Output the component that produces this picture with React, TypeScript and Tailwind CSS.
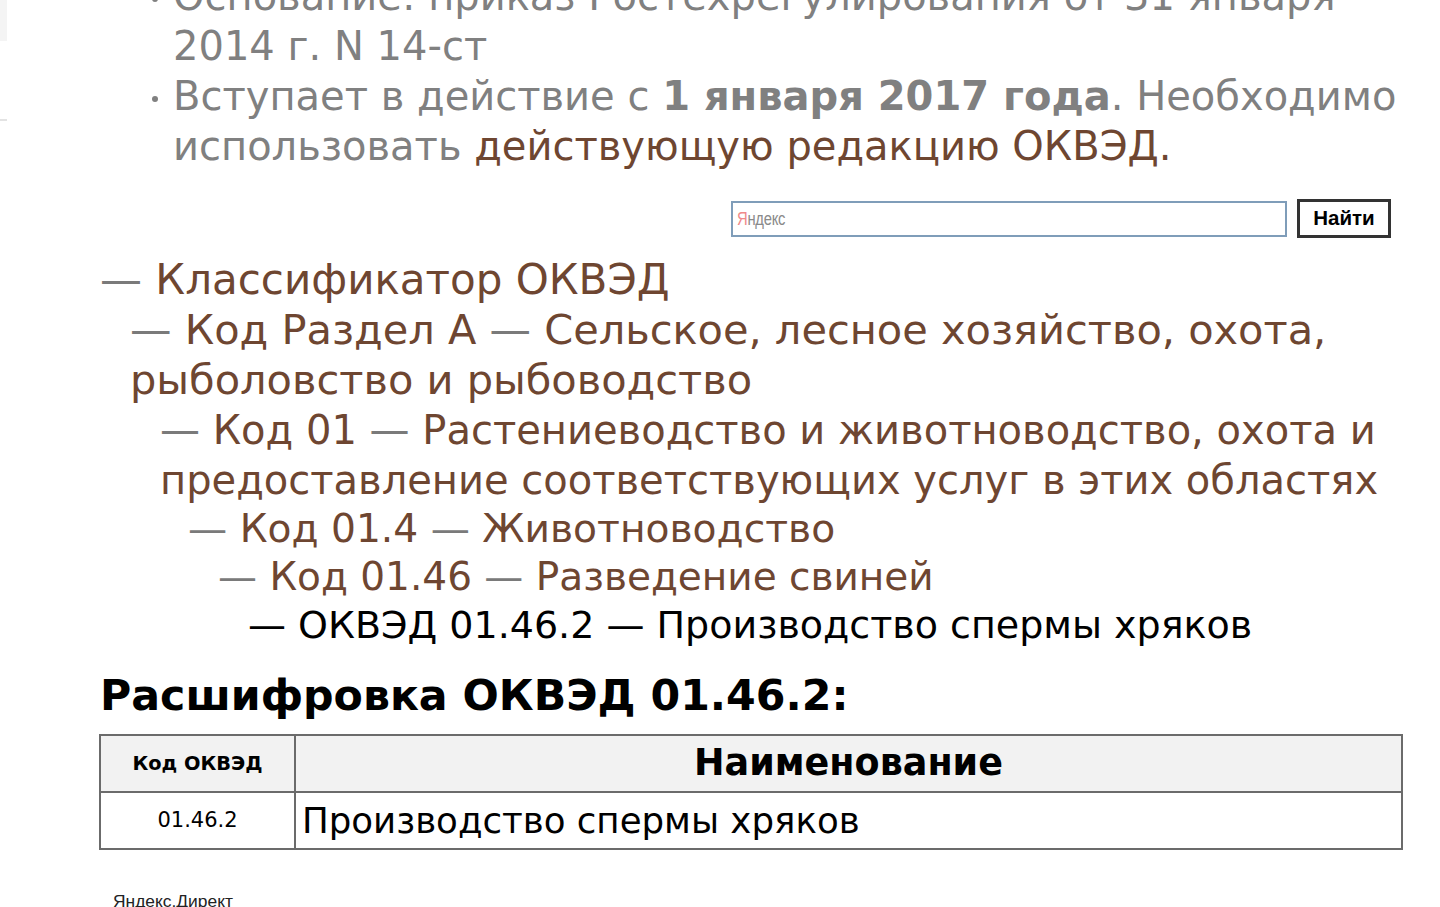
import React from 'react';

const gray = 'text-[#808080]';
const brown = 'text-[#6e4631]';

function Dash() {
  return <span className="text-[#7a7a7a]">—</span>;
}

function TreeRow({ cls, children }: { cls: string; children: React.ReactNode }) {
  return <div className={`whitespace-nowrap ${cls}`}>{children}</div>;
}

function Bullet() {
  return (
    <span className="w-[21px] shrink-0">
      <span className="inline-block h-[6px] w-[6px] rounded-full bg-[#808080] align-middle" />
    </span>
  );
}

export default function App() {
  return (
    <div className="min-h-screen bg-white overflow-hidden font-['DejaVu_Sans',Verdana,sans-serif] text-[36px]">
      <div className="flex">
        {/* leftover sidebar edge */}
        <div className="w-[7px] shrink-0">
          <div className="h-[41px] bg-[#f4f4f4]" />
          <div className="mt-[78px] h-[2px] bg-[#e3e3e3]" />
        </div>

        <div className="w-[1395px] shrink-0">
          {/* notes */}
          <div className={`-mt-[29px] pl-[145px] text-[40px] leading-[50px] whitespace-nowrap ${gray}`}>
            <div className="flex">
              <Bullet />
              <div>
                Основание: приказ Ростехрегулирования от 31 января
                <br />
                2014 г. N 14-ст
              </div>
            </div>
            <div className="flex">
              <Bullet />
              <div>
                Вступает в действие с <b>1 января 2017 года</b>. Необходимо
                <br />
                использовать <a className={brown}>действующую редакцию ОКВЭД.</a>
              </div>
            </div>
          </div>

          {/* yandex search */}
          <div className="mt-[28px] flex justify-end gap-[10px] pr-[11px]">
            <div className="mt-[2px] flex h-[36px] w-[556px] items-center border-2 border-[#7f9db9] bg-white pl-[4px]">
              <span className="origin-left scale-x-[0.82] font-['Liberation_Sans',Arial,sans-serif] text-[18px] tracking-[-0.3px] text-[#8a8a8a]">
                <span className="text-[#f08a8a]">Я</span>ндекс
              </span>
            </div>
            <button className="h-[39px] w-[94px] border-[3px] border-[#333333] bg-white font-['Liberation_Sans',Arial,sans-serif] text-[20.5px] font-bold text-black">
              Найти
            </button>
          </div>

          {/* classifier tree */}
          <div className={`mt-[17px] ${brown}`}>
            <TreeRow cls="pl-[93px] text-[42px] leading-[50px]">
              <Dash /> Классификатор ОКВЭД
            </TreeRow>
            <TreeRow cls="pl-[123px] text-[41.5px] leading-[50px]">
              <Dash /> Код Раздел А <Dash /> Сельское, лесное хозяйство, охота,
              <br />
              рыболовство и рыбоводство
            </TreeRow>
            <TreeRow cls="pl-[153px] text-[40px] leading-[50px]">
              <Dash /> Код 01 <Dash /> Растениеводство и животноводство, охота и
              <br />
              предоставление соответствующих услуг в этих областях
            </TreeRow>
            <TreeRow cls="pl-[181px] text-[39.2px] leading-[48px]">
              <Dash /> Код 01.4 <Dash /> Животноводство
            </TreeRow>
            <TreeRow cls="pl-[211px] text-[39px] leading-[48px]">
              <Dash /> Код 01.46 <Dash /> Разведение свиней
            </TreeRow>
            <div className="whitespace-nowrap pl-[241px] text-[38px] leading-[48px] text-black">
              — ОКВЭД 01.46.2 — Производство спермы хряков
            </div>
          </div>

          {/* decoding */}
          <div className="pl-[92px]">
            <h1 className="mt-[22px] pl-px text-[42.7px] font-bold leading-[48px] text-black">
              Расшифровка ОКВЭД 01.46.2:
            </h1>
            <table className="mt-[15px] w-[1304px] border-collapse border-2 border-[#6b6b6b] text-black">
              <thead>
                <tr className="h-[57px] bg-[#f2f2f2]">
                  <th className="w-[195px] border-2 border-[#6b6b6b] text-[19.4px] font-bold">Код ОКВЭД</th>
                  <th className="border-2 border-[#6b6b6b] text-[36.5px] font-bold">Наименование</th>
                </tr>
              </thead>
              <tbody>
                <tr className="h-[57px]">
                  <td className="border-2 border-[#6b6b6b] text-center text-[21px]">01.46.2</td>
                  <td className="border-2 border-[#6b6b6b] pl-[6px] text-[35.6px]">Производство спермы хряков</td>
                </tr>
              </tbody>
            </table>
            <div className="mt-[42px] pl-[14px] font-['Liberation_Sans',Arial,sans-serif] text-[17.4px] leading-[18px] text-[#222]">
              Яндекс.Директ
            </div>
          </div>
        </div>
      </div>
    </div>
  );
}
